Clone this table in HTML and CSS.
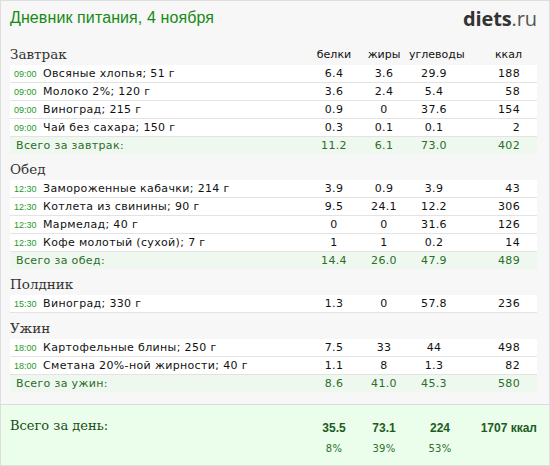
FILE: index.html
```html
<!DOCTYPE html>
<html lang="ru">
<head>
<meta charset="utf-8">
<title>Дневник питания</title>
<link rel="stylesheet" href="styles.css">
</head>
<body>
<div class="page">
  <header class="top">
    <h1 class="title">Дневник питания, 4 ноября</h1>
    <div class="logo"><b>diets</b>.ru</div>
  </header>

  <section class="meal">
    <div class="meal-head">
      <h2>Завтрак</h2>
      <span class="col">белки</span><span class="col">жиры</span><span class="col">углеводы</span><span class="col kcal">ккал</span>
    </div>
    <div class="row"><span class="name"><span class="time">09:00</span>Овсяные хлопья; 51 г</span><span class="n">6.4</span><span class="n">3.6</span><span class="n">29.9</span><span class="n kcal">188</span></div>
    <div class="row"><span class="name"><span class="time">09:00</span>Молоко 2%; 120 г</span><span class="n">3.6</span><span class="n">2.4</span><span class="n">5.4</span><span class="n kcal">58</span></div>
    <div class="row"><span class="name"><span class="time">09:00</span>Виноград; 215 г</span><span class="n">0.9</span><span class="n">0</span><span class="n">37.6</span><span class="n kcal">154</span></div>
    <div class="row"><span class="name"><span class="time">09:00</span>Чай без сахара; 150 г</span><span class="n">0.3</span><span class="n">0.1</span><span class="n">0.1</span><span class="n kcal">2</span></div>
    <div class="row total"><span class="name">Всего за завтрак:</span><span class="n">11.2</span><span class="n">6.1</span><span class="n">73.0</span><span class="n kcal">402</span></div>
  </section>

  <section class="meal">
    <div class="meal-head"><h2>Обед</h2></div>
    <div class="row"><span class="name"><span class="time">12:30</span>Замороженные кабачки; 214 г</span><span class="n">3.9</span><span class="n">0.9</span><span class="n">3.9</span><span class="n kcal">43</span></div>
    <div class="row"><span class="name"><span class="time">12:30</span>Котлета из свинины; 90 г</span><span class="n">9.5</span><span class="n">24.1</span><span class="n">12.2</span><span class="n kcal">306</span></div>
    <div class="row"><span class="name"><span class="time">12:30</span>Мармелад; 40 г</span><span class="n">0</span><span class="n">0</span><span class="n">31.6</span><span class="n kcal">126</span></div>
    <div class="row"><span class="name"><span class="time">12:30</span>Кофе молотый (сухой); 7 г</span><span class="n">1</span><span class="n">1</span><span class="n">0.2</span><span class="n kcal">14</span></div>
    <div class="row total"><span class="name">Всего за обед:</span><span class="n">14.4</span><span class="n">26.0</span><span class="n">47.9</span><span class="n kcal">489</span></div>
  </section>

  <section class="meal">
    <div class="meal-head"><h2>Полдник</h2></div>
    <div class="row"><span class="name"><span class="time">15:30</span>Виноград; 330 г</span><span class="n">1.3</span><span class="n">0</span><span class="n">57.8</span><span class="n kcal">236</span></div>
  </section>

  <section class="meal">
    <div class="meal-head"><h2>Ужин</h2></div>
    <div class="row"><span class="name"><span class="time">18:00</span>Картофельные блины; 250 г</span><span class="n">7.5</span><span class="n">33</span><span class="n">44</span><span class="n kcal">498</span></div>
    <div class="row"><span class="name"><span class="time">18:00</span>Сметана 20%-ной жирности; 40 г</span><span class="n">1.1</span><span class="n">8</span><span class="n">1.3</span><span class="n kcal">82</span></div>
    <div class="row total"><span class="name">Всего за ужин:</span><span class="n">8.6</span><span class="n">41.0</span><span class="n">45.3</span><span class="n kcal">580</span></div>
  </section>

  <footer class="day">
    <div class="day-label">Всего за день:</div>
    <div class="day-val">35.5</div>
    <div class="day-val">73.1</div>
    <div class="day-val">224</div>
    <div class="day-val day-kcal">1707 ккал</div>
    <div></div>
    <div class="day-pct">8%</div>
    <div class="day-pct">39%</div>
    <div class="day-pct">53%</div>
    <div></div>
  </footer>
</div>
</body>
</html>
```

FILE: styles.css
```css
* { box-sizing: border-box; }
html, body { margin: 0; padding: 0; background: #ffffff; }

.page {
  width: 550px;
  height: 466px;
  border: 1px solid #dedede;
  background: #f7f7f7;
  display: flex;
  flex-direction: column;
  font-family: "DejaVu Sans", Verdana, sans-serif;
  color: #111;
}

.top {
  height: 38px;
  padding: 0 12px 0 9px;
  display: flex;
  justify-content: space-between;
  align-items: center;
}
.title {
  margin: 0;
  font-family: "Liberation Sans", Arial, sans-serif;
  font-weight: normal;
  font-size: 16px;
  letter-spacing: 0.1px;
  color: #168a16;
  position: relative;
  top: -2px;
}
.logo {
  font-family: "Open Sans", sans-serif;
  font-size: 20px;
  color: #555;
  letter-spacing: -0.1px;
  position: relative;
  top: -2px;
}
.logo b { color: #333; font-weight: 700; }

.meal { padding: 0 12px 0 9px; }

.meal-head,
.row {
  display: grid;
  grid-template-columns: 1fr 50px 50px 50px 78px;
  align-items: center;
}
.meal-head {
  height: 26px;
  align-items: end;
  padding-bottom: 3px;
}
.meal-head h2 {
  margin: 0;
  font-family: "DejaVu Serif", Georgia, serif;
  font-weight: normal;
  font-size: 13.5px;
  color: #333;
  line-height: 16px;
}
.col {
  font-size: 11px;
  text-align: center;
  line-height: 14px;
}
.col.kcal { text-align: right; padding-right: 15px; }

.row {
  height: 18px;
  background: #fff;
  border-bottom: 1px solid #e3e3e3;
  font-size: 11px;
  letter-spacing: 0.35px;
}
.row .name {
  display: flex;
  align-items: center;
  white-space: nowrap;
}
.time {
  font-family: "Liberation Sans", Arial, sans-serif;
  font-size: 9px;
  color: #1f9a1f;
  letter-spacing: 0;
  width: 33px;
  padding-left: 4px;
}
.n { text-align: center; }
.n.kcal { text-align: right; padding-right: 17px; }

.row.total {
  background: #eff8ef;
  border-bottom: none;
  height: 17px;
  color: #2a6e2a;
}
.row.total .name { padding-left: 6px; }

.day {
  margin-top: auto;
  height: 61px;
  border-top: 1px solid #dcdcdc;
  background: #ebfdeb;
  padding: 12px 12px 0 9px;
  display: grid;
  grid-template-columns: 1fr 50px 50px 62px 66px;
  grid-template-rows: 22px 18px;
  align-items: center;
}
.day-label {
  font-family: "DejaVu Serif", Georgia, serif;
  font-size: 13px;
  color: #164f16;
  position: relative;
  top: -3px;
}
.day-val {
  font-family: "Liberation Sans", Arial, sans-serif;
  font-weight: bold;
  font-size: 12px;
  color: #1e5c1e;
  text-align: center;
}
.day-kcal { text-align: right; }
.day-pct {
  font-size: 10px;
  color: #2e6e2e;
  text-align: center;
  letter-spacing: 0.3px;
}
```
